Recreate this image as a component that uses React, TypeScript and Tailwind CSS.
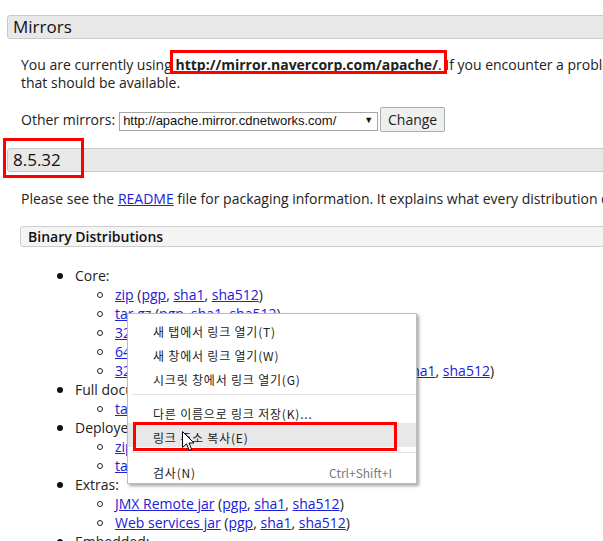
const linkCls = 'text-[#2020d8] underline'

type Group = { title: string; items: string[] }

const groups: Group[] = [
  {
    title: 'Core:',
    items: ['zip', 'tar.gz', '32-bit Windows zip', '64-bit Windows zip', '32-bit/64-bit Windows Service Installer'],
  },
  { title: 'Full documentation:', items: ['tar.gz'] },
  { title: 'Deployer:', items: ['zip', 'tar.gz'] },
  { title: 'Extras:', items: ['JMX Remote jar', 'Web services jar'] },
  { title: 'Embedded:', items: ['tar.gz', 'zip'] },
]

function SectionHeader({ children }: { children: React.ReactNode }) {
  return (
    <div className="ml-[7px] w-[700px] h-[24px] bg-[#e8e8e8] border border-[#c9c9c9] rounded-[3px] flex items-center pl-[5px] text-[17px] text-[#111]">
      {children}
    </div>
  )
}

function Download({ name }: { name: string }) {
  return (
    <div className="flex items-center h-[19px] ml-[97px]">
      <span className="w-[6px] h-[6px] rounded-full border border-[#222] mr-[12px]" />
      <span className="whitespace-nowrap">
        <a className={linkCls}>{name}</a> (<a className={linkCls}>pgp</a>, <a className={linkCls}>sha1</a>,{' '}
        <a className={linkCls}>sha512</a>)
      </span>
    </div>
  )
}

function MenuItem({ label, shortcut, active }: { label: string; shortcut?: string; active?: boolean }) {
  return (
    <div className={`h-[24px] flex items-center justify-between pl-[25px] pr-[24px] pt-[5px] ${active ? 'bg-[#e8e8e8]' : ''}`}>
      <span className="tracking-[0.8px]">{label}</span>
      {shortcut && <span className="text-[#7a7a7a]">{shortcut}</span>}
    </div>
  )
}

function Separator({ h }: { h: string }) {
  return (
    <div className={`${h} flex items-center pl-[4px]`}>
      <div className="h-px w-full bg-[#e2e2e2]" />
    </div>
  )
}

export default function App() {
  return (
    <div className="relative w-[603px] h-[541px] overflow-hidden bg-white font-['Open_Sans',sans-serif] text-[14px] text-[#222]">
      <div className="pt-[15px]">
        {/* Mirrors */}
        <SectionHeader>Mirrors</SectionHeader>
        <div className="mt-[17px] ml-[21px] leading-[18px] whitespace-nowrap">
          <p>
            You are currently using <b>http://mirror.navercorp.com/apache/</b>. If you encounter a problem with this
            mirror, please select another mirror. If all mirrors are failing, there are backup mirrors (at the end of the
            mirrors list)
          </p>
          <p>that should be available.</p>
        </div>

        <div className="mt-[15px] ml-[21px] h-[25px] flex items-center">
          <span className="whitespace-nowrap">Other mirrors:</span>
          <div className="ml-[4px] mt-[3px] w-[259px] h-[19px] border border-[#a6a6a6] bg-white flex items-center justify-between pl-[3px] pr-[4px] font-['Liberation_Sans',sans-serif] text-[13px] text-[#111]">
            <span>http://apache.mirror.cdnetworks.com/</span>
            <span className="text-[9px]">▼</span>
          </div>
          <button className="ml-[2px] w-[65px] h-[25px] bg-[#efefef] border border-[#acacac] rounded-[2px] text-[14px] text-[#222]">
            Change
          </button>
        </div>

        {/* Version */}
        <div className="mt-[16px]">
          <SectionHeader>8.5.32</SectionHeader>
        </div>
        <p className="mt-[18px] ml-[21px] leading-[18px] whitespace-nowrap">
          Please see the <a className={linkCls}>README</a> file for packaging information. It explains what every
          distribution contains.
        </p>

        <div className="mt-[18px] ml-[20px] w-[700px] h-[21px] bg-[#f4f4f4] border border-[#cdcdcd] rounded-[3px] flex items-center pl-[7px] font-semibold text-[14px] text-[#111]">
          Binary Distributions
        </div>

        <div className="mt-[19px] leading-[19px]">
          {groups.map((g) => (
            <div key={g.title}>
              <div className="flex items-center h-[19px] ml-[57px]">
                <span className="w-[6px] h-[6px] rounded-full bg-[#111] mr-[12px]" />
                <span>{g.title}</span>
              </div>
              {g.items.map((it, i) => (
                <Download key={i} name={it} />
              ))}
            </div>
          ))}
        </div>
      </div>

      {/* Highlight boxes */}
      <div className="absolute left-[170px] top-[50px] w-[277px] h-[24px] border-[3px] border-[#f00]" />
      <div className="absolute left-[3px] top-[138px] w-[81px] h-[40px] border-[3px] border-[#f00]" />

      {/* Context menu */}
      <div className="absolute left-[127px] top-[313px] w-[290px] bg-white border border-[#bdbdbd] shadow-[2px_2px_3px_rgba(0,0,0,0.35)] pt-[3px] font-['Noto_Sans_CJK_KR',sans-serif] text-[12px] leading-[16px] text-[#222]">
        <MenuItem label="새 탭에서 링크 열기(T)" />
        <MenuItem label="새 창에서 링크 열기(W)" />
        <MenuItem label="시크릿 창에서 링크 열기(G)" />
        <Separator h="h-[10px]" />
        <MenuItem label="다른 이름으로 링크 저장(K)..." />
        <MenuItem label="링크 주소 복사(E)" active />
        <Separator h="h-[11px]" />
        <MenuItem label="검사(N)" shortcut="Ctrl+Shift+I" />
        <div className="h-px" />
      </div>
      <div className="absolute left-[133px] top-[422px] w-[264px] h-[29px] border-[3px] border-[#f00]" />

      {/* Mouse pointer */}
      <svg className="absolute left-[182px] top-[431px]" width="13" height="21" viewBox="0 0 13 21">
        <path d="M0.5 0.5 L0.5 16.5 L4.5 12.8 L7.2 19.3 L9.6 18.3 L7 12 L12 12 Z" fill="#fff" stroke="#000" strokeWidth="1" strokeLinejoin="miter" />
      </svg>
    </div>
  )
}
